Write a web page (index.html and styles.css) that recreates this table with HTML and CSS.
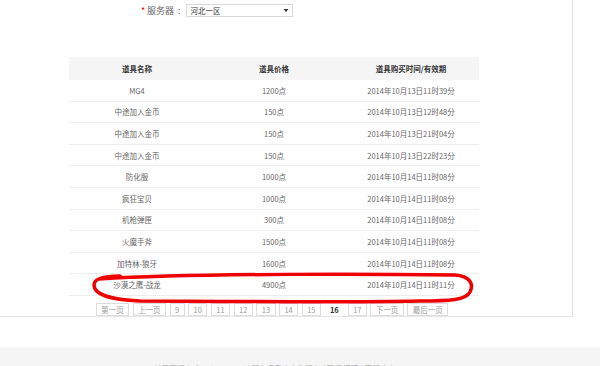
FILE: index.html
```html
<!DOCTYPE html>
<html lang="zh-CN">
<head>
    <meta charset="UTF-8">
    <title>道具购买记录</title>
    <link rel="stylesheet" href="styles.css">
</head>
<body>
    <div class="page">
        <div class="form-row">
            <span class="req">*</span>
            <span class="label">服务器</span>
            <span class="colon">:</span>
            <div class="select">
                <span>河北一区</span>
                <svg class="arrow" width="6" height="5" viewBox="0 0 6 5"><path d="M0.5 1 L5.5 1 L3 4 Z" fill="#333"/></svg>
            </div>
        </div>

        <div class="records">
            <div class="row head">
                <div>道具名称</div>
                <div>道具价格</div>
                <div>道具购买时间/有效期</div>
            </div>
            <div class="row"><div>MG4</div><div>1200点</div><div>2014年10月13日11时39分</div></div>
            <div class="row"><div>中途加入金币</div><div>150点</div><div>2014年10月13日12时48分</div></div>
            <div class="row"><div>中途加入金币</div><div>150点</div><div>2014年10月13日21时04分</div></div>
            <div class="row"><div>中途加入金币</div><div>150点</div><div>2014年10月13日22时23分</div></div>
            <div class="row"><div>防化服</div><div>1000点</div><div>2014年10月14日11时08分</div></div>
            <div class="row"><div>疯狂宝贝</div><div>1000点</div><div>2014年10月14日11时08分</div></div>
            <div class="row"><div>机枪弹匣</div><div>300点</div><div>2014年10月14日11时08分</div></div>
            <div class="row"><div>火魔手斧</div><div>1500点</div><div>2014年10月14日11时08分</div></div>
            <div class="row"><div>加特林-狼牙</div><div>1600点</div><div>2014年10月14日11时08分</div></div>
            <div class="row"><div>沙漠之鹰-战龙</div><div>4900点</div><div>2014年10月14日11时11分</div></div>
        </div>

        <div class="pager">
            <a>第一页</a>
            <a>上一页</a>
            <a>9</a>
            <a>10</a>
            <a>11</a>
            <a>12</a>
            <a>13</a>
            <a>14</a>
            <a>15</a>
            <span class="current">16</span>
            <a>17</a>
            <a>下一页</a>
            <a>最后一页</a>
        </div>

        <!-- hand drawn mark around the last record -->
        <svg class="mark" width="600" height="320" viewBox="0 0 600 320">
            <path d="M99 279 C200 273, 380 274, 455 275 C470 276, 474 284, 470 292 C466 300, 450 301, 420 301 C330 303, 220 301, 140 301 C110 300, 94 294, 94 285 C94 279, 102 276, 120 276"
                  fill="none" stroke="#ee0000" stroke-width="3.5" stroke-linecap="round" stroke-linejoin="round"/>
        </svg>
    </div>

    <div class="footer">
        <p>关于腾讯 | About Tencent | 服务条款 | 广告服务 | 腾讯招聘 | 客服中心</p>
    </div>
</body>
</html>
```

FILE: styles.css
```css
body {
    margin: 0;
    font-family: "Noto Sans CJK SC", "Noto Sans", sans-serif;
    background: #fff;
    color: #666;
}

.page {
    position: relative;
    width: 572px;
    height: 316px;
    border-right: 1px solid #e6e6e6;
    border-bottom: 1px solid #e6e6e6;
}

.form-row {
    display: flex;
    align-items: center;
    padding-top: 4px;
    padding-left: 141px;
    height: 13px;
}

.req {
    color: #e60000;
    font-size: 9px;
    width: 6px;
}

.label {
    font-size: 9px;
    color: #666;
}

.colon {
    font-size: 9px;
    color: #666;
    margin-left: 4px;
    margin-right: 5px;
}

.select {
    display: flex;
    align-items: center;
    justify-content: space-between;
    box-sizing: border-box;
    width: 107px;
    height: 13px;
    padding: 0 3px 0 4px;
    border: 1px solid #d9d9d9;
    font-size: 7.5px;
    color: #333;
}

.records {
    margin-top: 40px;
    margin-left: 69px;
    width: 410px;
    font-size: 7.5px;
}

.row {
    display: grid;
    grid-template-columns: 136px 138px 136px;
    align-items: center;
    text-align: center;
    box-sizing: border-box;
    height: 21.6px;
    border-bottom: 1px solid #eeeeee;
}

.row.head {
    height: 23px;
    background: #f5f5f5;
    border-bottom: none;
    color: #333;
    font-weight: bold;
}

.pager {
    display: flex;
    justify-content: center;
    gap: 3.4px;
    margin-top: 7px;
    margin-left: 69px;
    width: 406px;
    font-size: 7.5px;
    line-height: 11px;
}

.pager a,
.pager .current {
    border: 1px solid #dddddd;
    padding: 0 4.5px;
    color: #999;
}

.pager .current {
    border-color: transparent;
    color: #333;
    font-weight: bold;
}

.mark {
    position: absolute;
    left: 0;
    top: 0;
    pointer-events: none;
}

.footer {
    margin-top: 30px;
    height: 60px;
    background: #f5f5f5;
}

.footer p {
    margin: 0;
    width: 550px;
    padding-top: 16px;
    text-align: center;
    font-size: 8px;
    color: #999;
}
```
